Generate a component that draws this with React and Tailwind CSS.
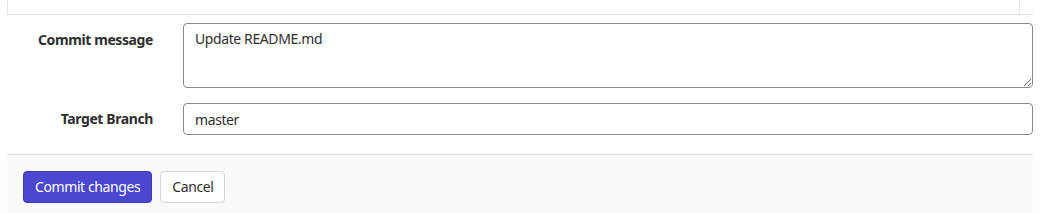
export default function App() {
  return (
    <div className="w-[1049px] h-[213px] bg-white overflow-hidden tracking-[-0.4px]" style={{ fontFamily: '"Noto Sans", "Open Sans", sans-serif' }}>
      <div className="ml-[7px] w-[1026px]">
        {/* editor bottom edge */}
        <div className="h-[15px] bg-[#fffffe] border-l border-b border-[#e3e3e3] flex justify-end">
          <div className="w-[14px] h-full border-l border-[#e3e3e3]" />
        </div>

        {/* form rows */}
        <div className="pt-[8px] pb-[19px] flex flex-col gap-[15px]">
          <div className="flex">
            <label className="w-[146px] shrink-0 text-right text-[14px] font-bold text-[#2e2e2e] pt-[7px] leading-[20px]">
              Commit message
            </label>
            <textarea
              defaultValue="Update README.md"
              className="ml-[30px] w-[850px] h-[65px] border border-[#8a8a8a] rounded-[4px] px-[11px] pt-[5px] text-[14px] leading-[20px] text-[#2e2e2e] outline-none"
            />
          </div>
          <div className="flex items-center">
            <label className="w-[146px] shrink-0 text-right text-[14px] font-bold text-[#2e2e2e] leading-[20px]">
              Target Branch
            </label>
            <input
              defaultValue="master"
              className="ml-[30px] w-[850px] h-[32px] border border-[#8a8a8a] rounded-[4px] px-[11px] text-[14px] text-[#2e2e2e] outline-none"
            />
          </div>
        </div>

        {/* footer actions */}
        <div className="border-t border-[#dcdcdc] bg-[#fafafa] h-[60px] pt-[16px] px-[16px] flex gap-[8px] items-start">
          <button className="h-[32px] px-[11px] rounded-[4px] bg-[#4b47d0] border border-[#3d39b8] text-white text-[14px] leading-none">
            Commit changes
          </button>
          <button className="h-[32px] px-[11px] rounded-[4px] bg-white border border-[#d6d6d6] text-[#2e2e2e] text-[14px] leading-none">
            Cancel
          </button>
        </div>
      </div>
    </div>
  );
}
